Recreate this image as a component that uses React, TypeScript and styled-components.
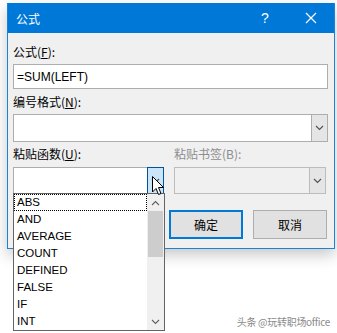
import React from 'react'
import styled, { createGlobalStyle } from 'styled-components'

const GlobalStyle = createGlobalStyle`
  html, body {
    margin: 0;
    padding: 0;
    background: #ffffff;
  }
  body {
    font-family: 'Segoe UI', 'Liberation Sans', 'Noto Sans CJK SC', sans-serif;
    font-size: 12px;
    color: #000;
  }
`

const Page = styled.div`
  position: relative;
  width: 337px;
  height: 333px;
  overflow: hidden;
  padding-top: 3px;
  box-sizing: border-box;
`

const Dialog = styled.div`
  margin-left: 7px;
  width: 326px;
  border: 1px solid #1883d7;
  border-top: none;
  box-shadow: 0 6px 14px rgba(0, 0, 0, 0.22);
  background: #f0f0f0;
`

const TitleBar = styled.div`
  height: 30px;
  background: #0078d7;
  color: #fff;
  display: flex;
  align-items: center;
  padding-left: 8px;
  font-family: 'Noto Sans CJK SC', sans-serif;
  font-size: 12px;
`

const Title = styled.span`
  flex: 1;
`

const TitleButton = styled.div`
  width: 46px;
  height: 30px;
  display: flex;
  align-items: center;
  justify-content: center;
  font-family: 'Liberation Sans', sans-serif;
  font-size: 14px;
`

const Body = styled.div`
  padding: 11px 6px 9px 5px;
  display: flex;
  flex-direction: column;
`

const Label = styled.div<{ $disabled?: boolean; $gap?: number }>`
  height: 16px;
  line-height: 16px;
  font-family: 'Noto Sans CJK SC', sans-serif;
  font-size: 12px;
  color: ${(p) => (p.$disabled ? '#8d8d8d' : '#000')};
  margin-bottom: ${(p) => p.$gap ?? 4}px;
  u {
    text-decoration: underline;
    text-underline-offset: 1px;
  }
`

const TextBox = styled.div`
  height: 25px;
  box-sizing: border-box;
  border: 1px solid #adadad;
  background: #fff;
  display: flex;
  align-items: center;
  padding-left: 3px;
  font-family: 'Liberation Sans', sans-serif;
  font-size: 12px;
  margin-bottom: 5px;
`

const Combo = styled.div<{ $disabled?: boolean; $h?: number }>`
  height: ${(p) => p.$h ?? 28}px;
  flex: none;
  box-sizing: border-box;
  border: 1px solid ${(p) => (p.$disabled ? '#bcbcbc' : '#adadad')};
  background: ${(p) => (p.$disabled ? '#f0f0f0' : '#fff')};
  display: flex;
  justify-content: flex-end;
`

const ComboButton = styled.div<{ $active?: boolean; $disabled?: boolean }>`
  width: 17px;
  margin: -1px -1px -1px 0;
  box-sizing: border-box;
  border: 1px solid ${(p) => (p.$active ? '#005499' : p.$disabled ? '#bcbcbc' : '#adadad')};
  background: ${(p) => (p.$active ? '#cce4f7' : '#e5e5e5')};
  display: flex;
  align-items: center;
  justify-content: center;
`

const Row = styled.div`
  display: flex;
  gap: 10px;
  margin-top: 4px;
`

const Column = styled.div<{ $w: number }>`
  width: ${(p) => p.$w}px;
  display: flex;
  flex-direction: column;
`

const ButtonRow = styled.div`
  display: flex;
  justify-content: flex-end;
  gap: 10px;
  margin-top: 16px;
  padding-right: 1px;
`

const Button = styled.div<{ $primary?: boolean }>`
  width: 74px;
  height: 29px;
  box-sizing: border-box;
  border: ${(p) => (p.$primary ? '2px solid #0078d7' : '1px solid #adadad')};
  background: #e1e1e1;
  display: flex;
  align-items: center;
  justify-content: center;
  font-family: 'Noto Sans CJK SC', sans-serif;
  font-size: 12px;
`

const DropList = styled.div`
  position: absolute;
  left: 13px;
  top: 193px;
  width: 152px;
  height: 138px;
  box-sizing: border-box;
  border: 1px solid #646464;
  background: #fff;
  display: flex;
`

const Items = styled.div`
  flex: 1;
  display: flex;
  flex-direction: column;
`

const Item = styled.div<{ $focus?: boolean }>`
  height: 17px;
  padding-left: 2px;
  font-family: 'Liberation Sans', sans-serif;
  font-size: 11.5px;
  line-height: 15px;
  box-sizing: border-box;
  border: 1px ${(p) => (p.$focus ? 'dotted #000' : 'solid transparent')};
`

const ScrollBar = styled.div`
  width: 17px;
  background: #f0f0f0;
  display: flex;
  flex-direction: column;
  align-items: center;
`

const ScrollArrow = styled.div`
  height: 17px;
  width: 17px;
  display: flex;
  align-items: center;
  justify-content: center;
`

const Thumb = styled.div`
  width: 15px;
  height: 46px;
  background: #cdcdcd;
`

const Track = styled.div`
  flex: 1;
`

const Cursor = styled.svg`
  position: absolute;
  left: 152px;
  top: 176px;
`

const Watermark = styled.div`
  position: absolute;
  right: 7px;
  top: 314px;
  font-family: 'Noto Sans CJK SC', sans-serif;
  font-size: 10px;
  color: #8a8a8a;
  letter-spacing: -0.3px;
`

const Chevron = ({ up, color = '#505050' }: { up?: boolean; color?: string }) => (
  <svg width="9" height="6" viewBox="0 0 9 6">
    <path
      d={up ? 'M1 5 L4.5 1.5 L8 5' : 'M1 1 L4.5 4.5 L8 1'}
      fill="none"
      stroke={color}
      strokeWidth="1.1"
    />
  </svg>
)

const items = ['ABS', 'AND', 'AVERAGE', 'COUNT', 'DEFINED', 'FALSE', 'IF', 'INT']

export default function App() {
  return (
    <Page>
      <GlobalStyle />
      <Dialog>
        <TitleBar>
          <Title>公式</Title>
          <TitleButton>?</TitleButton>
          <TitleButton>
            <svg width="12" height="12" viewBox="0 0 12 12">
              <path d="M1 1 L11 11 M11 1 L1 11" stroke="#fff" strokeWidth="1.2" />
            </svg>
          </TitleButton>
        </TitleBar>
        <Body>
          <Label>
            公式(<u>F</u>):
          </Label>
          <TextBox>=SUM(LEFT)</TextBox>
          <Label>
            编号格式(<u>N</u>):
          </Label>
          <Combo>
            <ComboButton>
              <Chevron />
            </ComboButton>
          </Combo>
          <Row>
            <Column $w={151}>
              <Label $gap={5}>
                粘贴函数(<u>U</u>):
              </Label>
              <Combo $h={27}>
                <ComboButton $active>
                  <Chevron />
                </ComboButton>
              </Combo>
            </Column>
            <Column $w={152}>
              <Label $disabled $gap={5}>
                粘贴书签(B):
              </Label>
              <Combo $disabled $h={27}>
                <ComboButton $disabled>
                  <Chevron />
                </ComboButton>
              </Combo>
            </Column>
          </Row>
          <ButtonRow>
            <Button $primary>确定</Button>
            <Button>取消</Button>
          </ButtonRow>
        </Body>
      </Dialog>
      <DropList>
        <Items>
          {items.map((it, i) => (
            <Item key={it} $focus={i === 0}>
              {it}
            </Item>
          ))}
        </Items>
        <ScrollBar>
          <ScrollArrow>
            <Chevron up color="#606060" />
          </ScrollArrow>
          <Thumb />
          <Track />
          <ScrollArrow>
            <Chevron color="#606060" />
          </ScrollArrow>
        </ScrollBar>
      </DropList>
      <Cursor width="13" height="20" viewBox="0 0 13 20">
        <path
          d="M0.5 0.5 L0.5 16 L4 12.5 L6.5 18.5 L9 17.5 L6.5 11.5 L11.5 11.5 Z"
          fill="#fff"
          stroke="#000"
          strokeWidth="1"
          strokeLinejoin="round"
        />
      </Cursor>
      <Watermark>头条 @玩转职场office</Watermark>
    </Page>
  )
}
